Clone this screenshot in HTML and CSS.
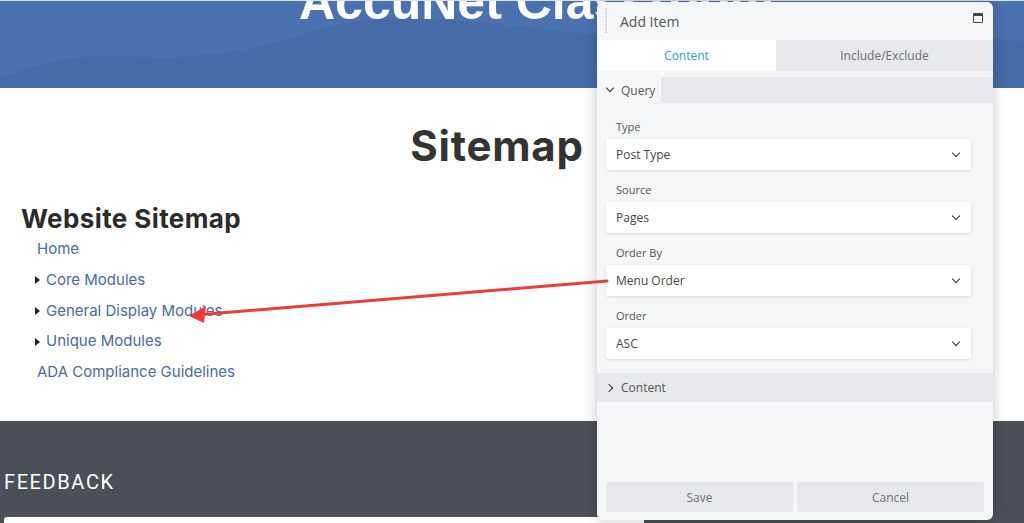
FILE: index.html
```html
<!DOCTYPE html>
<html lang="en">
<head>
    <meta charset="UTF-8">
    <title>Sitemap - AccuNet Classroom</title>
    <link rel="stylesheet" href="styles.css">
</head>
<body>
    <header class="hero">
        <svg class="hero-wave" width="1024" height="88" viewBox="0 0 1024 88" preserveAspectRatio="none">
            <path d="M0 88 L0 78 C40 60 80 52 130 55 C200 60 260 48 320 28 C380 10 460 18 560 30 C700 45 800 20 1024 40 L1024 0 L0 0 Z" fill="#4a72b1"/>
        </svg>
        <div class="hero-title">AccuNet Classroom</div>
    </header>

    <main class="content">
        <h1 class="page-title">Sitemap</h1>
        <h2 class="sitemap-title">Website Sitemap</h2>
        <ul class="sitemap">
            <li><a href="#">Home</a></li>
            <li class="has-children"><a href="#">Core Modules</a></li>
            <li class="has-children"><a href="#">General Display Modules</a></li>
            <li class="has-children"><a href="#">Unique Modules</a></li>
            <li><a href="#">ADA Compliance Guidelines</a></li>
        </ul>
    </main>

    <footer class="site-footer">
        <h3 class="feedback-title">FEEDBACK</h3>
        <div class="feedback-input"></div>
    </footer>

    <!-- annotation arrow -->
    <svg class="arrow" width="1024" height="523" viewBox="0 0 1024 523">
        <line x1="607" y1="281" x2="202" y2="314.5" stroke="#ec3b3b" stroke-width="3" stroke-linecap="round"/>
        <polygon points="189,316 206,306 204,323" fill="#ec3b3b"/>
    </svg>

    <div class="panel">
        <div class="panel-head">
            <span class="handle"></span>
            <span class="panel-title">Add Item</span>
            <span class="maximize"></span>
        </div>
        <div class="tabs">
            <div class="tab active">Content</div>
            <div class="tab">Include/Exclude</div>
        </div>
        <div class="section-head">
            <div class="section-label open">
                <span class="caret down"></span>
                Query
            </div>
        </div>
        <div class="fields">
            <div class="field">
                <div class="field-label">Type</div>
                <div class="select">Post Type <span class="chev"></span></div>
            </div>
            <div class="field">
                <div class="field-label">Source</div>
                <div class="select">Pages <span class="chev"></span></div>
            </div>
            <div class="field">
                <div class="field-label">Order By</div>
                <div class="select">Menu Order <span class="chev"></span></div>
            </div>
            <div class="field">
                <div class="field-label">Order</div>
                <div class="select">ASC <span class="chev"></span></div>
            </div>
        </div>
        <div class="section-head closed">
            <div class="section-label">
                <span class="caret right"></span>
                Content
            </div>
        </div>
        <div class="panel-actions">
            <button class="btn">Save</button>
            <button class="btn">Cancel</button>
        </div>
    </div>
</body>
</html>
```

FILE: styles.css
```css
body {
    margin: 0;
    font-family: Inter, "Open Sans", sans-serif;
    background: #fff;
    overflow: hidden;
    height: 523px;
}

/* header band */
.hero {
    position: relative;
    height: 87px;
    background: #456ca8;
    border-top: 1px solid #dfe3ea;
    overflow: hidden;
}

.hero-wave {
    position: absolute;
    left: 0;
    top: 0;
}

.hero-title {
    position: relative;
    margin-top: -24px;
    padding-left: 299px;
    font-family: "Liberation Sans", Arial, sans-serif;
    font-weight: bold;
    font-size: 50px;
    line-height: 50px;
    color: #fff;
    white-space: nowrap;
}

/* main content */
.content {
    height: 299px;
    padding: 34px 0 0 21px;
}

.page-title {
    margin: 0;
    padding-right: 51px;
    text-align: center;
    font-size: 42px;
    line-height: 48px;
    font-weight: 700;
    letter-spacing: 0.8px;
    color: #333;
}

.sitemap-title {
    margin: 34px 0 0;
    font-size: 26px;
    line-height: 30px;
    font-weight: 700;
    letter-spacing: 0.4px;
    color: #2b2b2b;
}

.sitemap {
    list-style: none;
    margin: 0;
    padding: 0 0 0 16px;
}

.sitemap li {
    line-height: 30.8px;
    font-size: 15px;
}

.sitemap a {
    color: #4a6aa3;
    text-decoration: none;
}

.sitemap .has-children {
    display: flex;
    align-items: center;
    margin-left: -2px;
}

.sitemap .has-children::before {
    content: "";
    width: 0;
    height: 0;
    border-top: 4px solid transparent;
    border-bottom: 4px solid transparent;
    border-left: 5px solid #222;
    margin-right: 6px;
}

/* footer */
.site-footer {
    height: 102px;
    background: #4b4f58;
    padding: 0 0 0 4px;
    overflow: hidden;
}

.feedback-title {
    margin: 0;
    padding-top: 50px;
    font-family: Roboto, sans-serif;
    font-weight: 400;
    font-size: 20px;
    line-height: 22px;
    letter-spacing: 1.6px;
    color: #fff;
}

.feedback-input {
    margin-top: 24px;
    width: 640px;
    height: 20px;
    background: #fff;
    border-radius: 3px;
}

/* annotation */
.arrow {
    position: absolute;
    left: 0;
    top: 0;
    z-index: 2;
}

/* floating editor panel */
.panel {
    position: absolute;
    left: 597px;
    top: 2px;
    width: 396px;
    height: 518px;
    background: #f5f6f8;
    border-radius: 6px;
    box-shadow: 0 0 14px rgba(0, 0, 0, 0.22);
    display: flex;
    flex-direction: column;
    overflow: hidden;
    font-family: "Open Sans", "Noto Sans", sans-serif;
    z-index: 1;
}

.panel-head {
    height: 38px;
    display: flex;
    align-items: center;
    position: relative;
}

.handle {
    width: 2px;
    height: 26px;
    margin: 0 13px 0 8px;
    background: repeating-linear-gradient(to bottom, #c9ccd1 0 1px, transparent 1px 2px);
}

.panel-title {
    font-size: 14px;
    color: #555;
    margin-top: 1px;
}

.maximize {
    position: absolute;
    right: 10px;
    top: 11px;
    width: 8px;
    height: 6px;
    border: 1.5px solid #444;
    border-top-width: 3px;
    border-radius: 1px;
}

.tabs {
    display: flex;
    height: 31px;
}

.tab {
    flex: 1;
    display: flex;
    align-items: center;
    justify-content: center;
    background: #e6e8eb;
    font-size: 12px;
    color: #6d6f73;
}

.tab.active {
    flex: 0 0 179px;
    background: #fff;
    color: #2ea0c6;
}

.section-head {
    margin-top: 6px;
    height: 26px;
    background: #e6e8eb;
    display: flex;
}

.section-label {
    display: flex;
    align-items: center;
    gap: 8px;
    padding: 0 10px;
    font-size: 12px;
    color: #555;
}

.section-label.open {
    background: #f5f6f8;
    box-sizing: border-box;
    width: 64px;
}

.caret {
    flex-shrink: 0;
    width: 5px;
    height: 5px;
    border-right: 1.6px solid #333;
    border-bottom: 1.6px solid #333;
}

.caret.down {
    transform: rotate(45deg);
    margin-top: -4px;
}

.caret.right {
    transform: rotate(-45deg);
}

.section-head.closed {
    margin-top: 14px;
    height: 29px;
}

.section-head.closed .section-label {
    padding-left: 9px;
    gap: 9px;
}

.fields {
    padding: 17px 22px 0 9px;
    display: flex;
    flex-direction: column;
    gap: 13px;
}

.field-label {
    font-size: 11px;
    line-height: 14px;
    color: #555;
    padding-left: 10px;
    margin-bottom: 5px;
}

.select {
    height: 31px;
    background: #fff;
    border-radius: 3px;
    box-shadow: 0 1px 3px rgba(0, 0, 0, 0.12);
    display: flex;
    align-items: center;
    justify-content: space-between;
    padding: 0 12px 0 10px;
    font-size: 12px;
    color: #444;
}

.chev {
    width: 5px;
    height: 5px;
    border-right: 1.6px solid #333;
    border-bottom: 1.6px solid #333;
    transform: rotate(45deg);
    margin-top: -4px;
}

.panel-actions {
    margin-top: auto;
    display: flex;
    gap: 4px;
    padding: 0 9px 8px;
}

.btn {
    flex: 1;
    height: 30px;
    border: none;
    border-radius: 2px;
    background: #e6e8eb;
    font-family: "Open Sans", "Noto Sans", sans-serif;
    font-size: 12px;
    color: #6d6f73;
}
```
